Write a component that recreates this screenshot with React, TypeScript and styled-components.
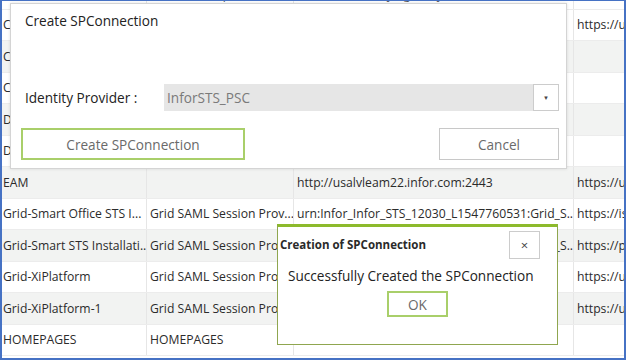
import React from "react"
import styled, { createGlobalStyle, css } from "styled-components"

const GlobalStyle = createGlobalStyle`
  html, body {
    margin: 0;
    padding: 0;
    background: #ffffff;
  }
  body {
    font-family: "Open Sans", "Noto Sans", "Liberation Sans", sans-serif;
  }
`

type Row = {
  name: string
  description: string
  identifier: string
  url: string
}

const rows: Row[] = [
  { name: "Cloud Portal", description: "Cloud Portal", identifier: "urn:Infor_Cloud_Portal", url: "https://u" },
  { name: "CloudSuite Analytics", description: "", identifier: "", url: "" },
  { name: "CRM Business Extension", description: "", identifier: "", url: "" },
  { name: "Data Lake", description: "", identifier: "", url: "" },
  { name: "Document Management", description: "", identifier: "", url: "" },
  { name: "EAM", description: "", identifier: "http://usalvleam22.infor.com:2443", url: "https://u" },
  {
    name: "Grid-Smart Office STS I...",
    description: "Grid SAML Session Prov...",
    identifier: "urn:Infor_Infor_STS_12030_L1547760531:Grid_S...",
    url: "https://is",
  },
  {
    name: "Grid-Smart STS Installati...",
    description: "Grid SAML Session Prov...",
    identifier: "urn:Infor_Infor_STS_12030_L1547760531:Grid_S...",
    url: "https://p",
  },
  { name: "Grid-XiPlatform", description: "Grid SAML Session Prov...", identifier: "urn:Infor_Grid_XiPlatform", url: "https://u" },
  { name: "Grid-XiPlatform-1", description: "Grid SAML Session Prov...", identifier: "urn:Infor_Grid_XiPlatform_1", url: "https://u" },
  { name: "HOMEPAGES", description: "HOMEPAGES", identifier: "", url: "" },
]

const Frame = styled.div`
  position: relative;
  width: 626px;
  height: 360px;
  box-sizing: border-box;
  border: 2px solid #4672c4;
  border-top-width: 1px;
  overflow: hidden;
  background: #ffffff;
`

const Grid = styled.div`
  display: flex;
  flex-direction: column;
  margin-top: -23px;
  margin-left: -2px;
`

const GridRow = styled.div<{ $alt?: boolean }>`
  display: grid;
  grid-template-columns: 147px 147px 280px 60px;
  height: 31.5px;
  background: ${(p) => (p.$alt ? "#f2f3f2" : "#ffffff")};
  border-bottom: 1px solid #ececec;
  box-sizing: border-box;
`

const Cell = styled.div<{ $head?: boolean }>`
  display: flex;
  align-items: center;
  padding: 0 3px;
  border-right: 1px solid #e6e6e6;
  white-space: nowrap;
  overflow: hidden;
  font-size: 12.2px;
  color: #2b2b2b;
  ${(p) =>
    p.$head &&
    css`
      justify-content: center;
      align-items: flex-end;
      padding-bottom: 6px;
      color: #5a5a5a;
    `}
`

const CreateDialog = styled.div`
  position: absolute;
  left: 8px;
  top: 2px;
  width: 557px;
  height: 166px;
  box-sizing: border-box;
  background: #ffffff;
  border: 1px solid #d4d4d4;
  box-shadow: 0 0 3px rgba(0, 0, 0, 0.12);
  padding: 0 7px 0 10px;
  display: flex;
  flex-direction: column;
`

const DialogHeader = styled.div`
  height: 80px;
  padding: 7px 0 0 4px;
  box-sizing: border-box;
  font-size: 13.6px;
  line-height: 20px;
  color: #222222;
`

const FieldRow = styled.div`
  display: flex;
  align-items: center;
  height: 27px;
`

const FieldLabel = styled.div`
  width: 139px;
  margin-left: 4px;
  font-size: 13.6px;
  color: #222222;
`

const Select = styled.div`
  flex: 1;
  display: flex;
  align-items: center;
  height: 27px;
  background: #e6e6e6;
  font-size: 13.6px;
  color: #7a7a7a;
  padding-left: 3px;
`

const SelectValue = styled.div`
  flex: 1;
`

const SelectArrow = styled.div`
  width: 24px;
  height: 25px;
  background: #ffffff;
  border: 1px solid #cccccc;
  display: flex;
  align-items: center;
  justify-content: center;
  font-size: 6px;
  color: #444444;
`

const ButtonRow = styled.div`
  display: flex;
  justify-content: space-between;
  margin-top: 17px;
`

const Button = styled.div<{ $primary?: boolean; $w: number; $h: number }>`
  width: ${(p) => p.$w}px;
  height: ${(p) => p.$h}px;
  box-sizing: border-box;
  display: flex;
  align-items: center;
  justify-content: center;
  background: #ffffff;
  border: ${(p) => (p.$primary ? "2px solid #a9cf6a" : "1px solid #c8c8c8")};
  font-size: 13.6px;
  color: #6a6a6a;
`

const AlertDialog = styled.div`
  position: absolute;
  left: 275px;
  top: 223px;
  width: 281px;
  height: 121px;
  box-sizing: border-box;
  background: #ffffff;
  border: 1px solid #8fa64f;
  border-top: 3px solid #8dba2c;
  display: flex;
  flex-direction: column;
`

const AlertTitleBar = styled.div`
  display: flex;
  align-items: flex-start;
  justify-content: space-between;
  padding: 4px 17px 0 2px;
  height: 32px;
  box-sizing: border-box;
`

const AlertTitle = styled.div`
  font-size: 11.5px;
  font-weight: 700;
  color: #2a2a2a;
  margin-top: 6px;
`

const CloseButton = styled.div`
  width: 31px;
  height: 28px;
  box-sizing: border-box;
  border: 1px solid #cccccc;
  display: flex;
  align-items: center;
  justify-content: center;
  font-size: 13px;
  color: #444444;
`

const AlertMessage = styled.div`
  padding: 7px 0 0 10px;
  font-size: 13.6px;
  line-height: 20px;
  color: #222222;
`

const AlertActions = styled.div`
  display: flex;
  justify-content: center;
  margin-top: 5px;
`

const App = () => {
  return (
    <>
      <GlobalStyle />
      <Frame>
        <Grid>
          <GridRow>
            <Cell $head>Name</Cell>
            <Cell $head>Description</Cell>
            <Cell $head>Relying Party Identifier</Cell>
            <Cell $head>De</Cell>
          </GridRow>
          {rows.map((item: Row, index: number) => (
            <GridRow key={index} $alt={index % 2 === 1}>
              <Cell>{item.name}</Cell>
              <Cell>{item.description}</Cell>
              <Cell>{item.identifier}</Cell>
              <Cell>{item.url}</Cell>
            </GridRow>
          ))}
        </Grid>

        <CreateDialog>
          <DialogHeader>Create SPConnection</DialogHeader>
          <FieldRow>
            <FieldLabel>Identity Provider :</FieldLabel>
            <Select>
              <SelectValue>InforSTS_PSC</SelectValue>
              <SelectArrow>▼</SelectArrow>
            </Select>
          </FieldRow>
          <ButtonRow>
            <Button $primary $w={224} $h={32}>Create SPConnection</Button>
            <Button $w={120} $h={32}>Cancel</Button>
          </ButtonRow>
        </CreateDialog>

        <AlertDialog>
          <AlertTitleBar>
            <AlertTitle>Creation of SPConnection</AlertTitle>
            <CloseButton>×</CloseButton>
          </AlertTitleBar>
          <AlertMessage>Successfully Created the SPConnection</AlertMessage>
          <AlertActions>
            <Button $primary $w={61} $h={26}>OK</Button>
          </AlertActions>
        </AlertDialog>
      </Frame>
    </>
  )
}

export default App
